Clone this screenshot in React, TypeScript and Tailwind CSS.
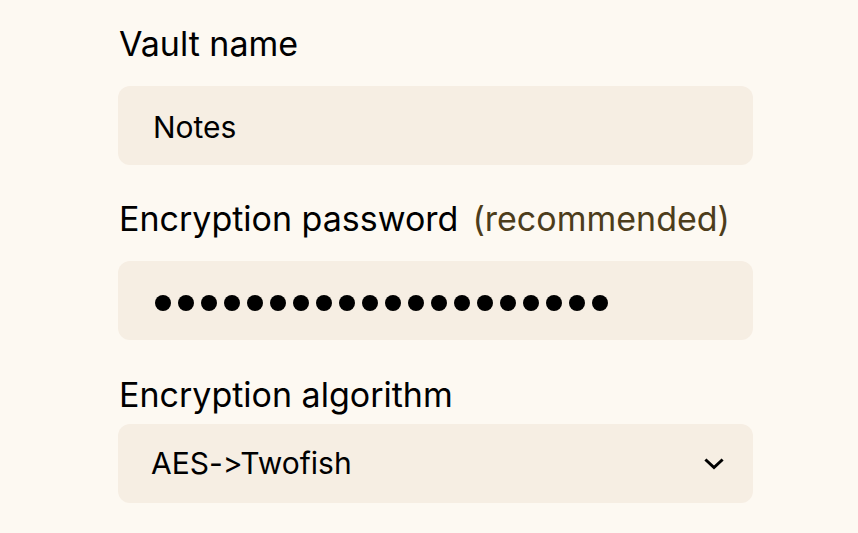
import React from 'react'

const Chevron = () => (
  <svg width="20" height="12" viewBox="0 0 20 12" fill="none" stroke="currentColor" strokeWidth="3" strokeLinecap="square" strokeLinejoin="miter">
    <path d="M2.5 2.5l7.5 7 7.5-7" />
  </svg>
)

const dots = Array.from({ length: 20 })

export default function App() {
  return (
    <div className="min-h-screen w-full bg-[#fdf9f2] font-['Inter','Noto_Sans',sans-serif] text-black [font-feature-settings:'calt'_0,'liga'_0]">
      <div className="ml-[118px] flex w-[635px] flex-col pt-[24px]">
        <label className="pl-[1px] text-[34px] leading-[40px]">Vault name</label>
        <div className="mt-[22px] flex h-[79px] items-center rounded-[12px] bg-[#f6eee3] px-[35px] pt-[3px] text-[30px]">
          Notes
        </div>

        <label className="mt-[34px] flex gap-[14px] pl-[1px] text-[34px] leading-[40px]">
          <span>Encryption password</span>
          <span className="text-[#4d3d1b]">(recommended)</span>
        </label>
        <div className="mt-[22px] flex h-[79px] items-center rounded-[12px] bg-[#f6eee3] px-[37px] pt-[5px]">
          <div className="flex gap-[7px]">
            {dots.map((_, i) => (
              <span key={i} className="h-[16px] w-[16px] rounded-full bg-black" />
            ))}
          </div>
        </div>

        <label className="mt-[35px] pl-[1px] text-[34px] leading-[40px]">Encryption algorithm</label>
        <div className="mt-[9px] flex h-[79px] items-center justify-between rounded-[12px] bg-[#f6eee3] pl-[33px] pr-[29px] text-[30px]">
          <span>AES-&gt;Twofish</span>
          <Chevron />
        </div>
      </div>
    </div>
  )
}
